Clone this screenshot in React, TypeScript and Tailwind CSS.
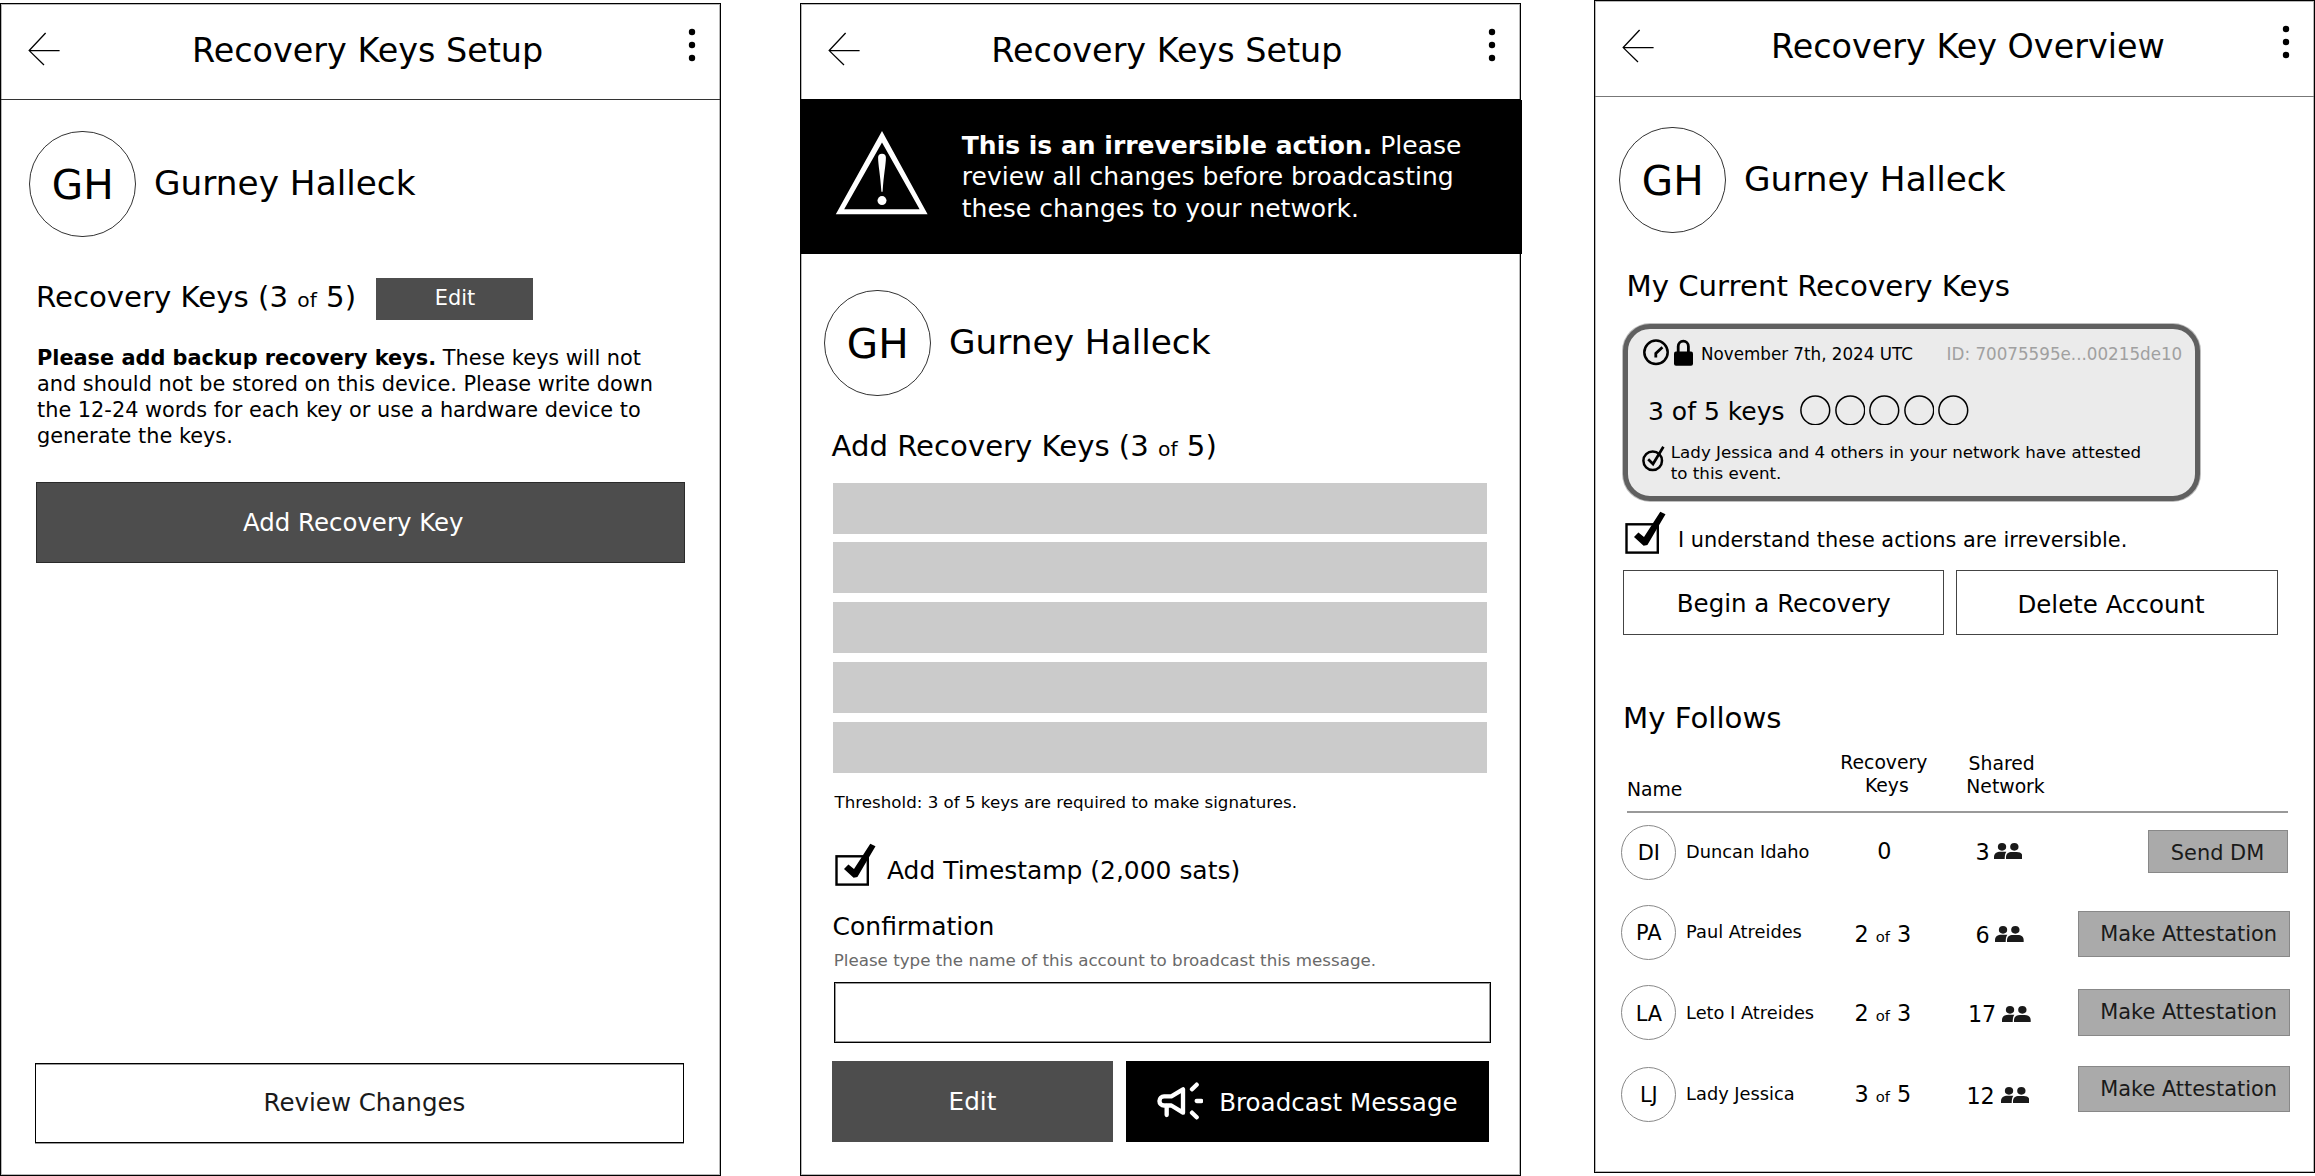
import type { ReactNode } from "react";

function BackArrow() {
  return (
    <svg className="ml-[27px] mt-[27px] h-[36px] w-[33px] shrink-0" viewBox="0 0 33 36" fill="none" stroke="#000" strokeWidth="1.3">
      <path d="M31.6 19.6H1.2M17.6 2L1.2 19.6L16 34" />
    </svg>
  );
}

function MenuDots() {
  return (
    <svg className="ml-auto mr-[24px] mt-[24px] h-[34px] w-[8px] shrink-0" viewBox="0 0 8 34">
      <circle cx="4" cy="4" r="3.2" />
      <circle cx="4" cy="17" r="3.2" />
      <circle cx="4" cy="30" r="3.2" />
    </svg>
  );
}

function Panel({ className, children }: { className: string; children: ReactNode }) {
  return (
    <section className={`flex h-[1173px] w-[721px] shrink-0 flex-col border border-black shadow-[inset_0_0_0_1px_rgba(0,0,0,0.28)] ${className}`}>
      {children}
    </section>
  );
}

function Header({ title, titleClass, lineClass }: { title: string; titleClass: string; lineClass: string }) {
  return (
    <header className={`flex h-[96px] shrink-0 items-start border-b ${lineClass}`}>
      <BackArrow />
      <h1 className={`whitespace-nowrap text-[33.4px] leading-[39px] ${titleClass}`}>{title}</h1>
      <MenuDots />
    </header>
  );
}

function Profile({ className }: { className: string }) {
  return (
    <div className={`flex h-[106px] shrink-0 items-start ${className}`}>
      <div className="flex h-[106px] w-[106.5px] shrink-0 justify-center rounded-full border border-[#333] pl-px pt-[29px] text-[40.5px] leading-[48px]">
        GH
      </div>
      <span className="ml-[18.5px] mt-[32px] whitespace-nowrap text-[34.3px] leading-[40px]">Gurney Halleck</span>
    </div>
  );
}

function CheckedBox() {
  return (
    <svg className="h-[43px] w-[42px] shrink-0" viewBox="0 0 42 43">
      <rect x="1.5" y="13.3" width="31.3" height="28.3" fill="none" stroke="#000" strokeWidth="2.4" />
      <path d="M9 26L13.4 21.5L19 26L35.3 0.7L40.5 3.2L22.4 34L18.6 34.7Z" />
    </svg>
  );
}

function WarningIcon() {
  return (
    <svg className="ml-[35px] mt-[30px] h-[86px] w-[93px] shrink-0" viewBox="0 0 93 86" fill="#fff">
      <path fillRule="evenodd" d="M47 1L92.6 84.3H0.8ZM47 12.4L9.2 79.3H84.6Z" />
      <path d="M43.1 27.6A3.9 3.9 0 0 1 50.9 27.6C50.9 35 48.6 45 47.6 61.8H46.4C45.4 45 43.1 35 43.1 27.6Z" />
      <circle cx="47" cy="70.6" r="4.5" />
    </svg>
  );
}

function MegaphoneIcon() {
  return (
    <svg
      className="ml-[31px] mt-[21.5px] h-[38px] w-[46.7px] shrink-0"
      viewBox="36 38 140 114"
      fill="none"
      stroke="#fff"
      strokeWidth="13"
      strokeLinecap="round"
      strokeLinejoin="round"
    >
      <path d="M79 81L114 60V130L79 108.5H57A13.7 13.7 0 0 1 57 81Z" />
      <path d="M65 110V137M141 60L155 46M155 95H169M141 130L155 144" />
    </svg>
  );
}

function ClockIcon() {
  return (
    <svg className="ml-[15px] mt-[10px] h-[27px] w-[26px] shrink-0" viewBox="0 0 26 27" fill="none" stroke="#000">
      <circle cx="13" cy="13.3" r="11.7" strokeWidth="2.5" />
      <path d="M12.8 18.4V14.4L19.4 8.2" strokeWidth="2.8" />
    </svg>
  );
}

function LockIcon() {
  return (
    <svg className="ml-[5px] mt-[10px] h-[27px] w-[19px] shrink-0" viewBox="0 0 19 27">
      <rect x="0" y="12.5" width="19" height="14.3" rx="2" />
      <path d="M4.2 14V7.5A5.1 5.3 0 0 1 14.4 7.5V14" fill="none" stroke="#000" strokeWidth="2.8" />
    </svg>
  );
}

function AttestedIcon() {
  return (
    <svg className="ml-[13px] mt-[4px] h-[26px] w-[24px] shrink-0" viewBox="0 0 24 26" fill="none" stroke="#000">
      <circle cx="11.7" cy="14.8" r="9.3" strokeWidth="2.5" />
      <path d="M7.2 13.3L12 18L22.4 0.8" strokeWidth="2.7" />
    </svg>
  );
}

function PeopleIcon({ className }: { className: string }) {
  return (
    <svg className={`h-[16px] w-[28.7px] shrink-0 ${className}`} viewBox="0 0 86 48" fill="#1a1a1a">
      <ellipse cx="24" cy="11.5" rx="12.5" ry="11.5" />
      <ellipse cx="61" cy="11.5" rx="12.5" ry="11.5" />
      <path d="M0 48V42C0 31 8 26 20 26H37C33 31 32.5 38 32 48Z" />
      <path d="M36 48V43C36 32 43 27 54 27H68C79 27 86 32 86 43V48Z" />
    </svg>
  );
}

function Threshold({ lead }: { lead: string }) {
  return (
    <>
      {lead} (3 <span className="text-[20.3px] leading-none">of</span> 5)
    </>
  );
}

const slots = [1, 2, 3, 4, 5];

const follows = [
  {
    initials: "DI", initialsClass: "pt-[15px]", name: "Duncan Idaho", nameClass: "mt-[16px]",
    keys: ["0"], keysClass: "pl-[31.8px] pt-[13px]",
    shared: "3", sharedClass: "pl-[10px]", countClass: "mt-[14px]", iconClass: "ml-[4px] mt-[18.5px]",
    action: "Send DM", actionClass: "ml-[70.6px] mt-[5px] h-[43px] w-[139.5px]", rowClass: "mt-[12px] h-[80px]",
  },
  {
    initials: "PA", initialsClass: "pt-[15px]", name: "Paul Atreides", nameClass: "mt-[16px]",
    keys: ["2", "3"], keysClass: "pl-[9px] pt-[16px]",
    shared: "6", sharedClass: "pl-[10px]", countClass: "mt-[17px]", iconClass: "ml-[5.6px] mt-[21.5px]",
    action: "Make Attestation", actionClass: "mt-[6px] h-[46px] w-[212.5px]", rowClass: "h-[80px]",
  },
  {
    initials: "LA", initialsClass: "pt-[16px]", name: "Leto I Atreides", nameClass: "mt-[17px]",
    keys: ["2", "3"], keysClass: "pl-[9px] pt-[15px]",
    shared: "17", sharedClass: "pl-[2.5px]", countClass: "mt-[16px]", iconClass: "ml-[5.7px] mt-[21px]",
    action: "Make Attestation", actionClass: "mt-[4px] h-[47px] w-[212.5px]", rowClass: "h-[82px]",
  },
  {
    initials: "LJ", initialsClass: "pt-[15px]", name: "Lady Jessica", nameClass: "mt-[16px]",
    keys: ["3", "5"], keysClass: "pl-[9px] pt-[14px]",
    shared: "12", sharedClass: "pl-px", countClass: "mt-[16px]", iconClass: "ml-[6px] mt-[20px]",
    action: "Make Attestation", actionClass: "-mt-px h-[46px] w-[212.5px]", rowClass: "h-[80px]",
  },
];

function SetupPanel() {
  return (
    <Panel className="mt-[3px]">
      <Header title="Recovery Keys Setup" titleClass="ml-[131px] mt-[27px]" lineClass="border-[#333]" />
      <Profile className="ml-[28px] mt-[31px]" />
      <div className="ml-[35px] mt-[41px] flex h-[42px] shrink-0 items-start">
        <h2 className="mt-[2px] w-[340px] shrink-0 whitespace-nowrap text-[29.2px] leading-[34px]">
          <Threshold lead="Recovery Keys" />
        </h2>
        <button className="flex h-[42px] w-[157px] justify-center bg-[#4d4d4d] pl-px pt-[8px] text-[20.9px] leading-[24px] text-white">Edit</button>
      </div>
      <p className="ml-[36px] mt-[25px] whitespace-nowrap text-[20.85px] leading-[26px]">
        <b>Please add backup recovery keys.</b> These keys will not
        <br />
        and should not be stored on this device. Please write down
        <br />
        the 12-24 words for each key or use a hardware device to
        <br />
        generate the keys.
      </p>
      <button className="ml-[34.5px] mt-[33px] flex h-[81px] w-[649px] shrink-0 border border-[#2a2a2a] bg-[#4d4d4d] pl-[206.5px] pt-[25px] text-[24.45px] leading-[29px] text-white">
        Add Recovery Key
      </button>
      <button className="ml-[33.5px] mt-[500px] flex h-[80px] w-[649px] shrink-0 border border-black pl-[228px] pt-[24px] text-[24.5px] leading-[29px] text-[#1a1a1a] shadow-[0_1px_0_rgba(0,0,0,0.4),inset_0_1px_0_rgba(0,0,0,0.4)]">
        Review Changes
      </button>
    </Panel>
  );
}

function ConfirmPanel() {
  return (
    <Panel className="ml-[79px] mt-[3px]">
      <Header title="Recovery Keys Setup" titleClass="ml-[130.3px] mt-[27px]" lineClass="border-black" />
      <div className="-ml-px flex h-[154px] w-[722px] shrink-0 items-start bg-black text-white">
        <WarningIcon />
        <p className="ml-[33.8px] mt-[30.2px] whitespace-nowrap text-[25px] leading-[31.2px]">
          <b>This is an irreversible action.</b> Please
          <br />
          review all changes before broadcasting
          <br />
          these changes to your network.
        </p>
      </div>
      <Profile className="ml-[23px] mt-[36px]" />
      <h2 className="ml-[30.5px] mt-[33px] h-[34px] whitespace-nowrap text-[29.15px] leading-[34px]">
        <Threshold lead="Add Recovery Keys" />
      </h2>
      <div className="ml-[31.5px] mt-[19.7px] flex w-[654.5px] flex-col gap-[8.8px]">
        {slots.map((n) => (
          <div key={n} className="h-[51px] bg-[#cbcbcb]" />
        ))}
      </div>
      <p className="ml-[33.6px] mt-[20px] whitespace-nowrap text-[16.68px] leading-[20px]">
        Threshold: 3 of 5 keys are required to make signatures.
      </p>
      <label className="ml-[34px] mt-[30px] flex h-[43px] shrink-0 items-start">
        <CheckedBox />
        <span className="ml-[10px] mt-[13px] whitespace-nowrap text-[24.95px] leading-[29px]">Add Timestamp (2,000 sats)</span>
      </label>
      <h3 className="ml-[31.6px] mt-[26px] text-[25px] leading-[29px]">Confirmation</h3>
      <p className="ml-[32.7px] mt-[9px] whitespace-nowrap text-[16.7px] leading-[20px] text-[#696969]">
        Please type the name of this account to broadcast this message.
      </p>
      <div className="ml-[33px] mt-[12px] h-[61px] w-[656.5px] shrink-0 border border-black shadow-[inset_0_0_0_1px_rgba(0,0,0,0.4)]" />
      <div className="ml-[30.5px] mt-[18px] flex h-[81px] shrink-0 gap-[13px] leading-[29px] text-white">
        <button className="flex w-[281px] justify-center bg-[#4d4d4d] pl-px pt-[26px] text-[24.7px]">Edit</button>
        <button className="flex w-[363px] items-start bg-black text-[24.55px]">
          <MegaphoneIcon />
          <span className="ml-[16px] mt-[27px] whitespace-nowrap">Broadcast Message</span>
        </button>
      </div>
    </Panel>
  );
}

function OverviewPanel() {
  return (
    <Panel className="ml-[73px]">
      <Header title="Recovery Key Overview" titleClass="ml-[116px] mt-[26px]" lineClass="border-[#777]" />
      <Profile className="ml-[24px] mt-[30px]" />
      <h2 className="ml-[31.5px] mt-[36px] whitespace-nowrap text-[29.2px] leading-[34px]">My Current Recovery Keys</h2>

      <div className="ml-[28px] mt-[21px] h-[177px] w-[577px] shrink-0 rounded-[27px] border-[5px] border-[#606060] bg-[#ebebeb] shadow-[0_0_0_1px_rgba(96,96,96,0.4)]">
        <div className="flex h-[40px] items-start whitespace-nowrap text-[16.74px] leading-[20px]">
          <ClockIcon />
          <LockIcon />
          <span className="ml-[8px] mt-[15px]">November 7th, 2024 UTC</span>
          <span className="ml-[33.7px] mt-[15px] text-[#a0a0a0]">ID: 70075595e...00215de10</span>
        </div>
        <div className="mt-[25.7px] flex h-[31px] items-start">
          <span className="ml-[20px] mt-[2.3px] whitespace-nowrap text-[25px] leading-[29px]">3 of 5 keys</span>
          <div className="ml-[15.5px] flex gap-[4px]">
            {slots.map((n) => (
              <svg key={n} className="h-[30.6px] w-[30.6px]" viewBox="0 0 30.6 30.6" fill="none" stroke="#000" strokeWidth="1.5">
                <circle cx="15.3" cy="15.3" r="14.4" />
              </svg>
            ))}
          </div>
        </div>
        <div className="mt-[16.3px] flex items-start">
          <AttestedIcon />
          <p className="ml-[5.8px] whitespace-nowrap text-[16.68px] leading-[21px]">
            Lady Jessica and 4 others in your network have attested
            <br />
            to this event.
          </p>
        </div>
      </div>

      <label className="ml-[30px] mt-[10.3px] flex h-[43px] shrink-0 items-start">
        <CheckedBox />
        <span className="ml-[11px] mt-[16.7px] whitespace-nowrap text-[20.86px] leading-[24px]">I understand these actions are irreversible.</span>
      </label>
      <div className="ml-[28px] mt-[15.7px] flex h-[65px] shrink-0 gap-[12px] text-[24.5px] leading-[29px]">
        <button className="flex w-[321px] border border-[#444] pl-[52.8px] pt-[18px]">Begin a Recovery</button>
        <button className="flex w-[322px] border border-[#444] pl-[60.4px] pt-[19px]">Delete Account</button>
      </div>

      <h2 className="ml-[28px] mt-[66px] text-[29.2px] leading-[34px]">My Follows</h2>
      <div className="ml-[32px] flex h-[78px] w-[661px] shrink-0 items-start border-b-2 border-[#999] text-[18.8px] leading-[23.5px]">
        <span className="mt-[43px] w-[213.3px] shrink-0">Name</span>
        <span className="mt-[16px] flex w-[126px] shrink-0 flex-col">
          <span>Recovery</span>
          <span className="ml-[24.6px]">Keys</span>
        </span>
        <span className="mt-[17px] flex flex-col">
          <span className="ml-[2.3px]">Shared</span>
          <span>Network</span>
        </span>
      </div>
      {follows.map((f) => (
        <div key={f.initials} className={`ml-[26.4px] flex shrink-0 items-start whitespace-nowrap ${f.rowClass}`}>
          <div className={`flex h-[55px] w-[55px] shrink-0 justify-center rounded-full border border-[#888] text-[20.9px] leading-[24px] ${f.initialsClass}`}>
            {f.initials}
          </div>
          <span className={`ml-[9.7px] w-[159.3px] shrink-0 text-[17.8px] leading-[21px] ${f.nameClass}`}>{f.name}</span>
          <span className={`w-[120px] shrink-0 text-[22.3px] leading-[26px] ${f.keysClass}`}>
            {f.keys[0]}
            {f.keys[1] && (
              <>
                {" "}
                <span className="text-[14.8px] leading-none">of</span> {f.keys[1]}
              </>
            )}
          </span>
          <span className={`flex w-[112.5px] shrink-0 items-start text-[22.3px] leading-[26px] ${f.sharedClass}`}>
            <span className={f.countClass}>{f.shared}</span>
            <PeopleIcon className={f.iconClass} />
          </span>
          <button className={`flex shrink-0 border border-[#888] bg-[#aaa] pl-[21.4px] pt-[10px] text-[20.9px] leading-[24px] text-[#1a1a1a] ${f.actionClass}`}>
            {f.action}
          </button>
        </div>
      ))}
    </Panel>
  );
}

export default function App() {
  return (
    <main className="flex h-[1176px] w-[2315px] items-start overflow-hidden bg-white font-['DejaVu_Sans',sans-serif] text-black">
      <SetupPanel />
      <ConfirmPanel />
      <OverviewPanel />
    </main>
  );
}
